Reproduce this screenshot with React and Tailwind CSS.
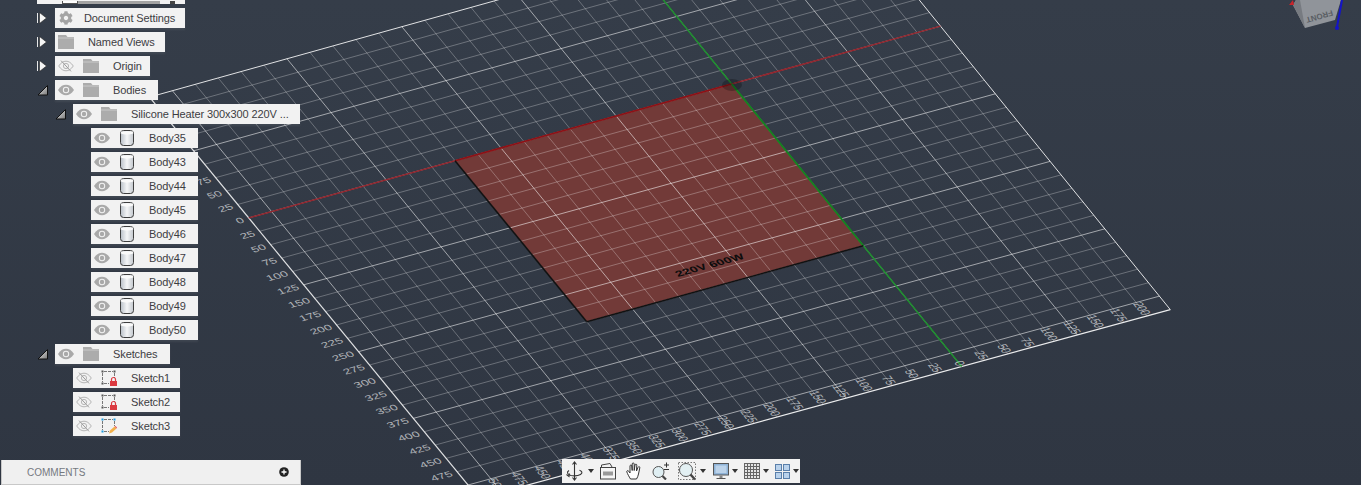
import React from 'react';
import { FaCog } from 'react-icons/fa';

// plane projection, taken from the four corners of the heater square (mm -> px)
const makeProjection = () => {
  const [x0, y0] = [731.7, 84];
  const [x1, y1] = [455, 160.7];
  const [x2, y2] = [586.7, 321.7];
  const [x3, y3] = [863.3, 245.7];
  const dx1 = x1 - x2, dx2 = x3 - x2, sx = x0 - x1 + x2 - x3;
  const dy1 = y1 - y2, dy2 = y3 - y2, sy = y0 - y1 + y2 - y3;
  const det = dx1 * dy2 - dx2 * dy1;
  const g = (sx * dy2 - dx2 * sy) / det;
  const h = (dx1 * sy - sx * dy1) / det;
  const A = x1 - x0 + g * x1, B = x3 - x0 + h * x3;
  const D = y1 - y0 + g * y1, E = y3 - y0 + h * y3;
  return (a, b) => {
    const s = a / 300, t = b / 300;
    const w = g * s + h * t + 1;
    return [(A * s + B * t + x0) / w, (D * s + E * t + y0) / w];
  };
};

const P = makeProjection();
const A_MIN = -225, A_MAX = 525, B_MIN = -225, B_MAX = 525;

const Line = ({ from, to, ...rest }) => {
  const p = P(from[0], from[1]);
  const q = P(to[0], to[1]);
  return <line x1={p[0]} y1={p[1]} x2={q[0]} y2={q[1]} {...rest} />;
};

const range = (from, to, step) => {
  const out = [];
  for (let v = from; v <= to; v += step) out.push(v);
  return out;
};

const PlaneText = ({ at, xAxis, yAxis, size, anchor, fill, children, weight }) => {
  const o = P(at[0], at[1]);
  const ex = P(at[0] + xAxis[0], at[1] + xAxis[1]);
  const ey = P(at[0] + yAxis[0], at[1] + yAxis[1]);
  const m = [ex[0] - o[0], ex[1] - o[1], ey[0] - o[0], ey[1] - o[1], o[0], o[1]];
  return (
    <text
      transform={`matrix(${m.join(' ')})`}
      fontSize={size}
      textAnchor={anchor}
      fill={fill}
      fontWeight={weight}
      fontFamily="'Liberation Sans', sans-serif"
    >
      {children}
    </text>
  );
};

const Viewport = () => {
  const lineColor = (v) => (v % 125 === 0 ? 'rgba(255,255,255,0.55)' : 'rgba(255,255,255,0.28)');
  const square = [P(0, 0), P(300, 0), P(300, 300), P(0, 300)].map((p) => p.join(',')).join(' ');
  return (
    <svg className="absolute inset-0" width="1361" height="485" viewBox="0 0 1361 485">
      <polygon points={square} fill="#723a38" />
      {range(A_MIN + 25, A_MAX - 25, 25).map((a) => (
        <Line key={a} from={[a, B_MIN]} to={[a, B_MAX]} stroke={lineColor(a)} />
      ))}
      {range(B_MIN + 25, B_MAX - 25, 25).map((b) => (
        <Line key={b} from={[A_MIN, b]} to={[A_MAX, b]} stroke={lineColor(b)} />
      ))}
      <Line from={[A_MIN, B_MIN]} to={[A_MAX, B_MIN]} stroke="rgba(255,255,255,0.85)" />
      <Line from={[A_MAX, B_MIN]} to={[A_MAX, B_MAX]} stroke="rgba(255,255,255,0.85)" strokeWidth="1.2" />
      <Line from={[A_MIN, B_MAX]} to={[A_MAX, B_MAX]} stroke="rgba(255,255,255,0.9)" strokeWidth="1.2" />
      <Line from={[A_MIN, B_MIN]} to={[A_MIN, B_MAX]} stroke="rgba(255,255,255,0.85)" />

      <Line from={[A_MIN, 0]} to={[A_MAX, 0]} stroke="#92242c" strokeWidth="1.5" />
      <Line from={[0, B_MIN]} to={[0, B_MAX]} stroke="#1e8f2e" strokeWidth="1.5" />
      <Line from={[0, 0]} to={[300, 0]} stroke="#8b1216" strokeWidth="1.6" />
      <Line from={[0, 0]} to={[0, 300]} stroke="#14801f" strokeWidth="1.4" />
      <Line from={[300, 0]} to={[300, 300]} stroke="#111" strokeWidth="1.6" />
      <Line from={[0, 300]} to={[300, 300]} stroke="#111" strokeWidth="1.6" />
      <ellipse cx="732" cy="85" rx="10" ry="6" fill="rgba(0,0,0,0.25)" />

      {/* labels down the left edge */}
      {range(-75, 475, 25).map((b) => (
        <PlaneText key={b} at={[A_MAX + 6, b + 5]} xAxis={[-1, 0]} yAxis={[0, 1]} size={13.5} anchor="end" fill="rgba(255,255,255,0.62)">
          {Math.abs(b)}
        </PlaneText>
      ))}
      {/* labels along the bottom edge */}
      {range(-200, 500, 25).map((a) => (
        <PlaneText key={a} at={[a + 4, B_MAX - 2]} xAxis={[0, 1]} yAxis={[1, 0]} size={13.5} anchor="end" fill="rgba(255,255,255,0.62)">
          {Math.abs(a)}
        </PlaneText>
      ))}
      <PlaneText at={[150, 270]} xAxis={[-1, 0]} yAxis={[0, 1]} size={14} anchor="middle" fill="#0c0c0c" weight="bold">
        220V 600W
      </PlaneText>

      {/* view cube */}
      <polygon points="1293,5 1305,28 1335,20 1341,0 1296,0" fill="#90949a" />
      <polygon points="1293,5 1305,28 1300,0 1296,0" fill="#777b81" />
      <text transform="translate(1332,10) rotate(164)" fontSize="8" fontWeight="bold" fill="#595d63" fontFamily="'Liberation Sans', sans-serif">FRONT</text>
      <path d="M1342 0 L1337 27" stroke="#1414c8" strokeWidth="2" fill="none" />
      <circle cx="1337" cy="28" r="2" fill="#1414c8" />
      <path d="M1289 5 L1293 0 L1294 5Z" fill="#c9252b" />
    </svg>
  );
};

const Eye = ({ off }) => (
  <svg width="16" height="12" viewBox="0 0 16 12" className="shrink-0">
    {off ? (
      <g fill="none" stroke="#b5b5b5" strokeWidth="1">
        <path d="M.7 6C3 2.6 5.4 1.2 8 1.2S13 2.6 15.3 6C13 9.4 10.6 10.8 8 10.8S3 9.4.7 6Z" />
        <circle cx="8" cy="6" r="2.6" />
        <path d="M3 .6 13 11.4" stroke="#9d9d9d" />
      </g>
    ) : (
      <g>
        <path d="M0 6C2.5 2 5.2.8 8 .8S13.500 2 16 6c-2.500 4-5.200 5.200-8 5.200S2.500 10 0 6Z" fill="#a9a9a9" />
        <circle cx="8" cy="6" r="3.200" fill="#f2f2f2" />
        <circle cx="8" cy="6" r="2.200" fill="#a9a9a9" />
      </g>
    )}
  </svg>
);

const Folder = () => (
  <svg width="16" height="14" viewBox="0 0 16 14" className="shrink-0">
    <path d="M0 0H8L9.500 2H16V14H0Z" fill="#acacac" />
    <path d="M0 3H16" stroke="#c9c9c9" strokeWidth="1" />
  </svg>
);

const BodyIcon = () => (
  <svg width="16" height="16" viewBox="0 0 16 16" className="shrink-0">
    <defs>
      <linearGradient id="cyl" x1="0" x2="1" y1="0" y2="0">
        <stop offset="0" stopColor="#b9c0c8" />
        <stop offset="0.5" stopColor="#f5f6f7" />
        <stop offset="1" stopColor="#c3c8ce" />
      </linearGradient>
    </defs>
    <rect x="1.500" y="0.500" width="13" height="15" rx="3" fill="url(#cyl)" stroke="#3e3e3e" />
    <path d="M2 3.500C5 5 11 5 14 3.500V1.500H2Z" fill="#fafafa" />
  </svg>
);

const SketchIcon = ({ edit }) => {
  const c = edit ? '#1e9be0' : '#555';
  return (
    <svg width="16" height="16" viewBox="0 0 16 16" className="shrink-0">
      <path d="M1.500 3V12M3 1.500H12M13.500 3V8" stroke="#777" fill="none" strokeDasharray="3 1" />
      <path d="M3 13.500H8" stroke="#777" fill="none" strokeDasharray="3 1" />
      <rect x="0.500" y="0.500" width="2" height="2" fill={c} />
      <rect x="12.500" y="0.500" width="2" height="2" fill={c} />
      <rect x="0.500" y="12.500" width="2" height="2" fill={c} />
      {edit ? (
        <>
          <path d="M8 15.500 9 12.500 13.500 8.500 15.500 10.500 11 14.500Z" fill="#f2b04a" />
          <path d="M13.500 8.500 15.500 10.500 16 9.500 14.500 8Z" fill="#e8505b" />
        </>
      ) : (
        <>
          <rect x="9" y="11" width="7" height="5" fill="#dc3a41" />
          <path d="M10.500 11V9.500a2 2 0 0 1 4 0V11" stroke="#dc3a41" strokeWidth="1.200" fill="none" />
        </>
      )}
    </svg>
  );
};

const Toggle = ({ open }) => (
  <svg width="12" height="12" viewBox="0 0 12 12" className="shrink-0">
    {open ? (
      <>
        <defs>
          <linearGradient id="tri" x1="0" x2="1" y1="0" y2="1">
            <stop offset="0" stopColor="#eee" />
            <stop offset="1" stopColor="#777" />
          </linearGradient>
        </defs>
        <path d="M1 11 10.500 1.500V11Z" fill="url(#tri)" stroke="#111" />
      </>
    ) : (
      <>
        <path d="M0.500 1V11" stroke="#e8e8e8" />
        <path d="M2.500 .5 9.500 6 2.500 11.500Z" fill="#f5f5f5" stroke="#222" strokeWidth="0.600" />
      </>
    )}
  </svg>
);

const Row = ({ indent, width, open, children, label, textGap = 'ml-[14px]' }) => (
  <div className="flex items-center h-5" style={{ paddingLeft: indent }}>
    <div className="w-[18px] h-5 flex items-center">
      {open !== undefined && <Toggle open={open} />}
    </div>
    <div className="h-5 flex items-center pl-[3px] bg-[#f2f2f2] shadow-[0_2px_2px_rgba(255,255,255,0.07)]" style={{ width }}>
      {children}
      <span className={`${textGap} text-[11px] leading-none text-[#3d3d42] tracking-[-0.1px] whitespace-nowrap`}>{label}</span>
    </div>
  </div>
);

const Slot = ({ children }) => <div className="w-4 flex justify-center items-center">{children}</div>;

const FolderRow = ({ indent, width, open, off, label }) => (
  <Row indent={indent} width={width} open={open} label={label}>
    <Eye off={off} />
    <div className="ml-[9px]"><Folder /></div>
  </Row>
);

const BodyRow = ({ label }) => (
  <Row indent={73} width={107} label={label}>
    <Eye />
    <div className="ml-[9px]"><BodyIcon /></div>
  </Row>
);

const SketchRow = ({ label, edit }) => (
  <Row indent={55} width={107} label={label}>
    <Eye off />
    <div className="ml-[9px]"><SketchIcon edit={edit} /></div>
  </Row>
);

const Caret = () => <span className="ml-[3px] w-0 h-0 border-x-[3px] border-x-transparent border-t-[4px] border-t-[#333]" />;

const OrbitIcon = () => (
  <svg width="20" height="20" viewBox="0 0 20 20" fill="none" stroke="#333" strokeWidth="1.100">
    <path d="M9.500 1V19M7.500 3.500 9.500 1l2 2.500M7.500 16.500l2 2.500 2-2.500" />
    <path d="M4 9.500C1.500 11 2 13.500 6 14.500c3 .6 7 .4 9.500-1 2.400-1.400 1.600-3.400-1-4.200" />
    <path d="M1.500 13.500 4 15.500l.5-3" />
  </svg>
);

const CameraIcon = () => (
  <svg width="16" height="18" viewBox="0 0 16 18" fill="none" stroke="#444">
    <rect x="0.500" y="5.500" width="15" height="11.500" fill="#f5f5f5" />
    <rect x="3" y="9.500" width="10" height="4" fill="#9a9a9a" stroke="none" />
    <path d="M1.500 5V3L10 1.500l2 3.500" />
  </svg>
);

const HandIcon = () => (
  <svg width="17" height="18" viewBox="0 0 17 18" fill="#fff" stroke="#333" strokeWidth="1">
    <path d="M4.500 17C3 14.500 1.500 12 .8 9.800c-.3-1.200 1.300-1.700 1.900-.6L4 11V4c0-1.300 1.700-1.300 1.800 0l.4 4.500V2c0-1.400 1.900-1.400 2 0v6.500L9 3c.2-1.300 1.900-1.100 1.800.2L10.500 9l1.600-3.800c.5-1.100 2-.6 1.700.6L12.500 12c-.5 2-1 3.500-2 5Z" />
  </svg>
);

const ZoomPlusIcon = () => (
  <svg width="18" height="18" viewBox="0 0 18 18" fill="none">
    <circle cx="6.500" cy="10" r="5.500" fill="#dfeef2" stroke="#555" />
    <path d="M10.500 14 14 17.500" stroke="#444" strokeWidth="2.200" />
    <path d="M12 3h5M14.500.5v5M12 7.500h5" stroke="#333" />
  </svg>
);

const ZoomWindowIcon = () => (
  <svg width="19" height="19" viewBox="0 0 19 19" fill="none">
    <rect x="0.500" y="0.500" width="17" height="17" stroke="#777" strokeDasharray="1.500 1.500" />
    <circle cx="8" cy="8" r="6.500" fill="#e3f0f3" stroke="#555" />
    <path d="M12.500 12.500 17 17.500" stroke="#444" strokeWidth="2.400" />
  </svg>
);

const MonitorIcon = () => (
  <svg width="16" height="17" viewBox="0 0 16 17">
    <rect x="0.500" y="0.500" width="15" height="11.500" fill="#90b4d8" stroke="#555" />
    <rect x="2.500" y="2.500" width="11" height="7.500" fill="#bcd3ea" />
    <path d="M6.500 12.500h3V15h-3Z" fill="#888" />
    <path d="M3.500 15.500h9" stroke="#555" />
  </svg>
);

const GridIcon = () => (
  <svg width="16" height="16" viewBox="0 0 16 16" stroke="#666" strokeWidth="1" fill="#e5e5e5">
    <rect x="0.500" y="0.500" width="15" height="15" />
    <path d="M3.500 0V16M6.500 0V16M9.500 0V16M12.500 0V16M0 3.500H16M0 6.500H16M0 9.500H16M0 12.500H16" />
  </svg>
);

const LayoutIcon = () => (
  <svg width="15" height="15" viewBox="0 0 15 15" stroke="#5a7faa" fill="#b9d2ec">
    <rect x="0.500" y="0.500" width="6" height="6" />
    <rect x="8.500" y="0.500" width="6" height="6" />
    <rect x="0.500" y="8.500" width="6" height="6" />
    <rect x="8.500" y="8.500" width="6" height="6" />
  </svg>
);

const Toolbar = () => (
  <div className="h-6 w-[238px] mb-[2px] ml-[261px] bg-[#f2f2f2] flex items-center pl-[3px]">
    <OrbitIcon />
    <Caret />
    <div className="ml-[6px]"><CameraIcon /></div>
    <div className="ml-[10px]"><HandIcon /></div>
    <div className="ml-[9px]"><ZoomPlusIcon /></div>
    <div className="ml-[8px]"><ZoomWindowIcon /></div>
    <Caret />
    <div className="ml-[7px]"><MonitorIcon /></div>
    <Caret />
    <div className="ml-[6px]"><GridIcon /></div>
    <Caret />
    <div className="ml-[6px]"><LayoutIcon /></div>
    <Caret />
  </div>
);

export default function App() {
  const bodies = ['Body35', 'Body43', 'Body44', 'Body45', 'Body46', 'Body47', 'Body48', 'Body49', 'Body50'];
  return (
    <div className="relative w-[1361px] h-[485px] overflow-hidden bg-gradient-to-b from-[#353d49] to-[#2f3642] font-['Liberation_Sans',sans-serif]">
      <Viewport />
      <div className="relative h-full flex flex-col justify-between">
        {/* Browser tree */}
        <div className="flex flex-col gap-1 -mt-4">
          <div className="flex items-center h-5 pl-[37px]">
            <div className="w-[148px] h-5 bg-[#f2f2f2] flex items-end pl-[25px]">
              <div className="w-4 h-[3px] border-x border-b border-[#555] bg-white" />
              <div className="w-[82px] h-[3px] bg-[#a3a3a3]" />
              <div className="ml-[10px] w-[5px] h-[3px] bg-[#444]" />
            </div>
          </div>
          <Row indent={37} width={130} open={false} label="Document Settings" textGap="ml-[10px]">
            <Slot><FaCog size={14} className="text-[#a4a4a4]" /></Slot>
          </Row>
          <Row indent={37} width={110} open={false} label="Named Views">
            <Folder />
          </Row>
          <FolderRow indent={37} width={95} open={false} off label="Origin" />
          <FolderRow indent={37} width={103} open label="Bodies" />
          <FolderRow indent={55} width={227} open label="Silicone Heater 300x300 220V ..." />
          {bodies.map((b) => <BodyRow key={b} label={b} />)}
          <FolderRow indent={37} width={115} open label="Sketches" />
          <SketchRow label="Sketch1" />
          <SketchRow label="Sketch2" />
          <SketchRow label="Sketch3" edit />
        </div>

        {/* Bottom bar */}
        <div className="flex items-end">
          <div className="ml-px w-[300px] h-[25px] bg-[#f0f0f0] border-x border-b border-[#c8c8c8] flex items-center justify-between pl-[25px] pr-[11px]">
            <span className="text-[10px] text-[#75797f]">COMMENTS</span>
            <svg width="10" height="10" viewBox="0 0 10 10">
              <circle cx="5" cy="5" r="4.800" fill="#222" />
              <path d="M2.500 5h5M5 2.500v5" stroke="#fff" strokeWidth="1.300" />
            </svg>
          </div>
          <Toolbar />
        </div>
      </div>
    </div>
  );
}
